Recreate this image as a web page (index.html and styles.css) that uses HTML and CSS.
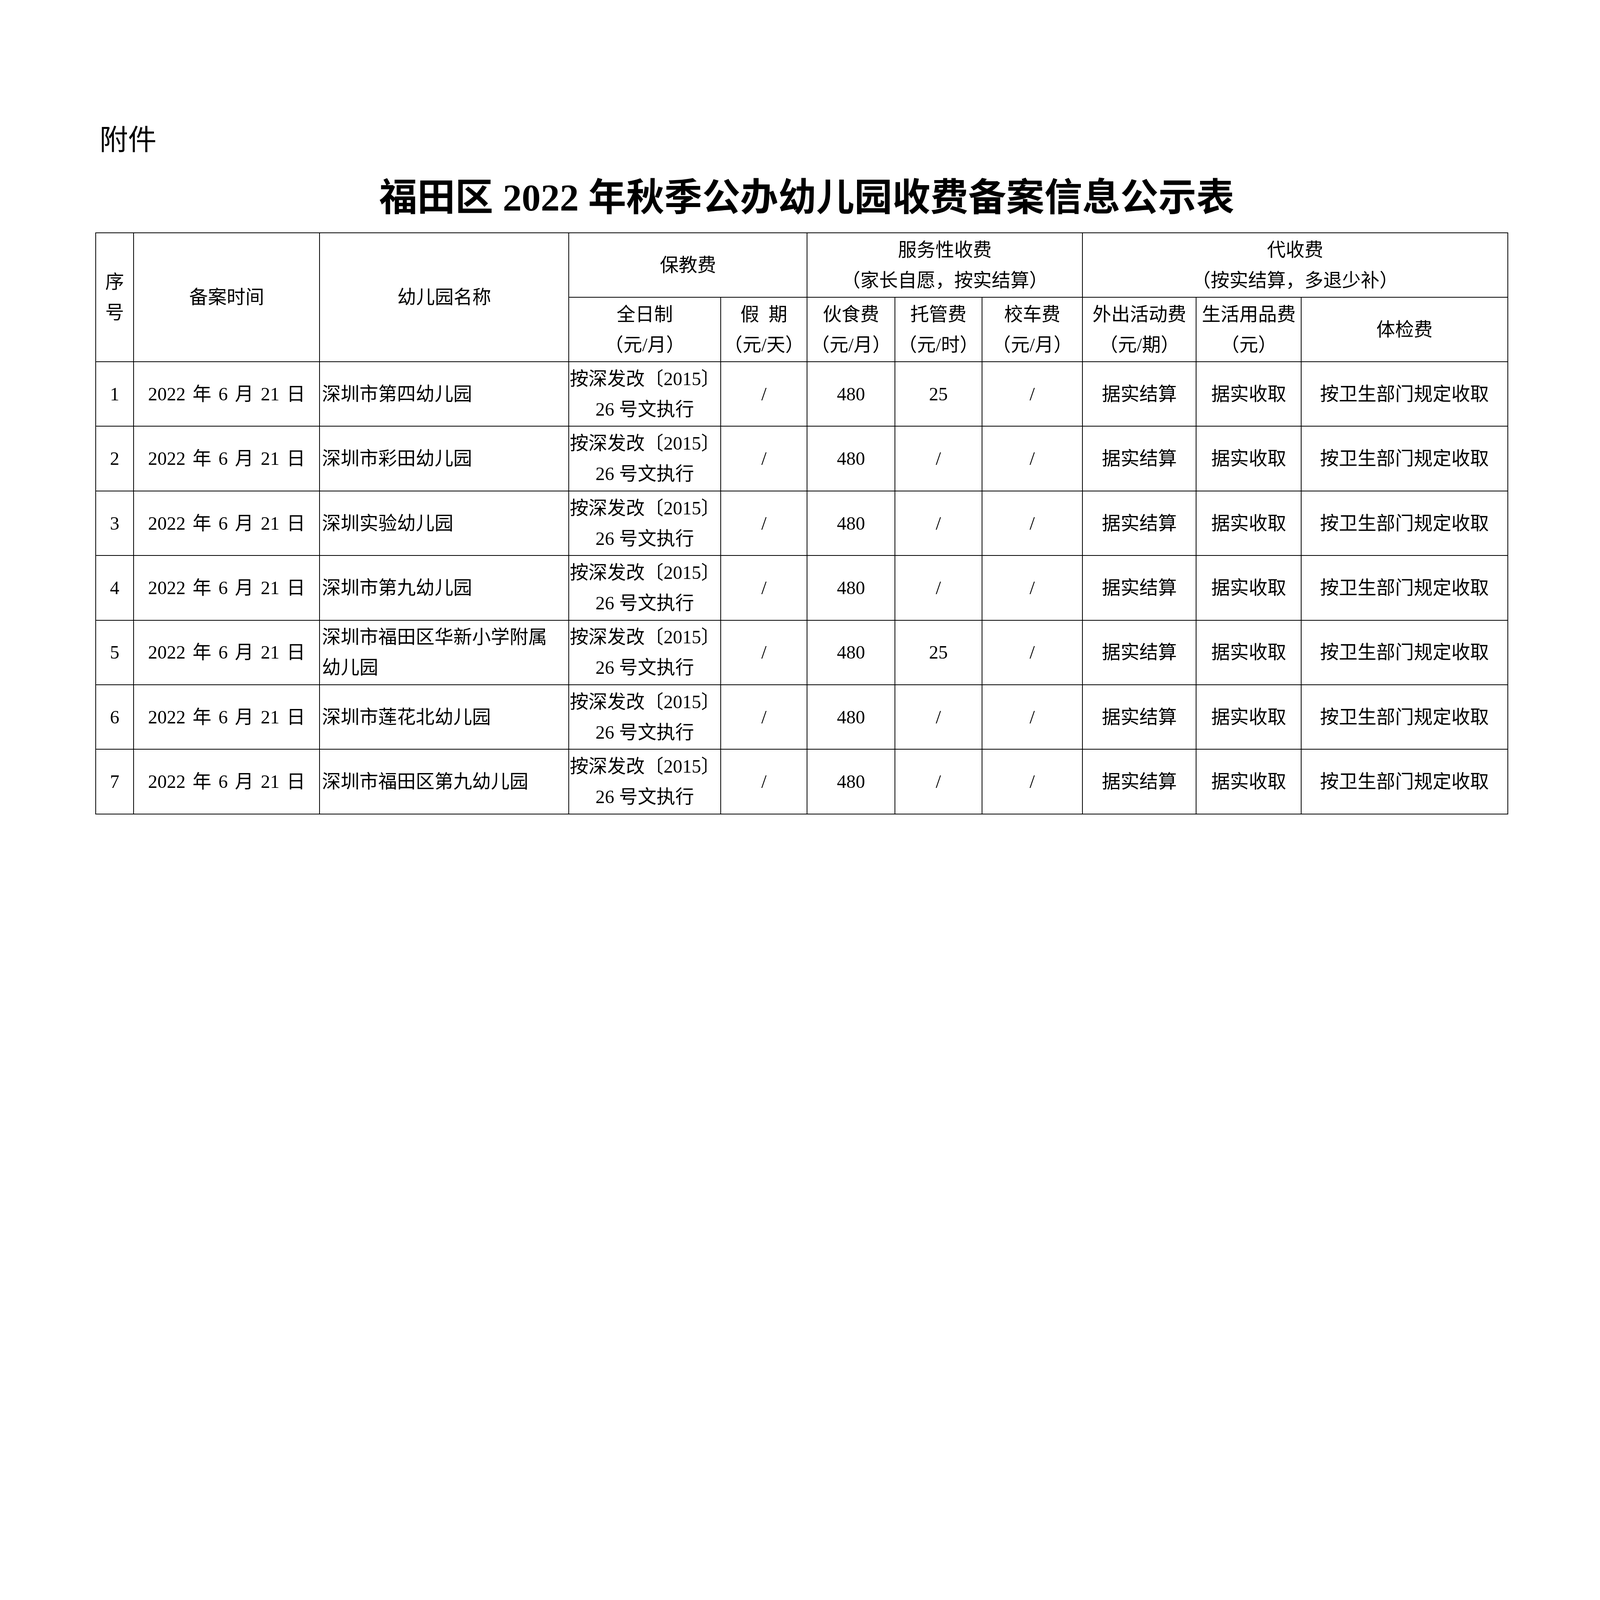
FILE: index.html
```html
<!DOCTYPE html>
<html lang="zh-CN">
<head>
<meta charset="utf-8">
<title>福田区2022年秋季公办幼儿园收费备案信息公示表</title>
<link rel="stylesheet" href="styles.css">
</head>
<body>
<div class="page">
  <div class="attach">附件</div>
  <h1 class="title">福田区 2022 年秋季公办幼儿园收费备案信息公示表</h1>
  <table class="fees">
    <colgroup>
      <col class="c-no"><col class="c-date"><col class="c-name"><col class="c-full"><col class="c-hol">
      <col class="c-food"><col class="c-care"><col class="c-bus"><col class="c-out"><col class="c-life"><col class="c-check">
    </colgroup>
    <tr class="hrow">
      <th rowspan="2">序<br>号</th>
      <th rowspan="2">备案时间</th>
      <th rowspan="2">幼儿园名称</th>
      <th colspan="2">保教费</th>
      <th colspan="3">服务性收费<br>（家长自愿，按实结算）</th>
      <th colspan="3">代收费<br>（按实结算，多退少补）</th>
    </tr>
    <tr class="hrow">
      <th>全日制<br>（元/月）</th>
      <th>假&nbsp;&nbsp;期<br>（元/天）</th>
      <th>伙食费<br>（元/月）</th>
      <th>托管费<br>（元/时）</th>
      <th>校车费<br>（元/月）</th>
      <th>外出活动费<br>（元/期）</th>
      <th>生活用品费<br>（元）</th>
      <th>体检费</th>
    </tr>
    <tr class="drow">
      <td>1</td><td class="date">2022 年 6 月 21 日</td><td class="name">深圳市第四幼儿园</td>
      <td>按深发改〔2015〕<br>26 号文执行</td><td>/</td><td>480</td><td>25</td><td>/</td>
      <td>据实结算</td><td>据实收取</td><td>按卫生部门规定收取</td>
    </tr>
    <tr class="drow">
      <td>2</td><td class="date">2022 年 6 月 21 日</td><td class="name">深圳市彩田幼儿园</td>
      <td>按深发改〔2015〕<br>26 号文执行</td><td>/</td><td>480</td><td>/</td><td>/</td>
      <td>据实结算</td><td>据实收取</td><td>按卫生部门规定收取</td>
    </tr>
    <tr class="drow">
      <td>3</td><td class="date">2022 年 6 月 21 日</td><td class="name">深圳实验幼儿园</td>
      <td>按深发改〔2015〕<br>26 号文执行</td><td>/</td><td>480</td><td>/</td><td>/</td>
      <td>据实结算</td><td>据实收取</td><td>按卫生部门规定收取</td>
    </tr>
    <tr class="drow">
      <td>4</td><td class="date">2022 年 6 月 21 日</td><td class="name">深圳市第九幼儿园</td>
      <td>按深发改〔2015〕<br>26 号文执行</td><td>/</td><td>480</td><td>/</td><td>/</td>
      <td>据实结算</td><td>据实收取</td><td>按卫生部门规定收取</td>
    </tr>
    <tr class="drow">
      <td>5</td><td class="date">2022 年 6 月 21 日</td><td class="name">深圳市福田区华新小学附属<br>幼儿园</td>
      <td>按深发改〔2015〕<br>26 号文执行</td><td>/</td><td>480</td><td>25</td><td>/</td>
      <td>据实结算</td><td>据实收取</td><td>按卫生部门规定收取</td>
    </tr>
    <tr class="drow">
      <td>6</td><td class="date">2022 年 6 月 21 日</td><td class="name">深圳市莲花北幼儿园</td>
      <td>按深发改〔2015〕<br>26 号文执行</td><td>/</td><td>480</td><td>/</td><td>/</td>
      <td>据实结算</td><td>据实收取</td><td>按卫生部门规定收取</td>
    </tr>
    <tr class="drow">
      <td>7</td><td class="date">2022 年 6 月 21 日</td><td class="name">深圳市福田区第九幼儿园</td>
      <td>按深发改〔2015〕<br>26 号文执行</td><td>/</td><td>480</td><td>/</td><td>/</td>
      <td>据实结算</td><td>据实收取</td><td>按卫生部门规定收取</td>
    </tr>
  </table>
</div>
</body>
</html>
```

FILE: styles.css
```css
/* 1rem = 100px when the window is 6735px wide; the layout scales with the window */
html {
  font-size: calc(100vw / 67.35);
}
html, body {
  margin: 0;
  padding: 0;
  background: #fff;
}
body {
  font-family: "Liberation Serif", "Noto Sans CJK SC", serif;
  color: #000;
}
.page {
  width: 67.35rem;
  min-height: 47.62rem;
  box-sizing: border-box;
  padding: 5.07rem 0 0 4.01rem;
  background: #fff;
}
.attach {
  font-family: "Noto Sans CJK SC", sans-serif;
  font-size: 1.2rem;
  line-height: 1.44rem;
  margin-left: 0.18rem;
}
.title {
  width: 59.44rem;
  margin: 0.85rem 0 0.51rem;
  padding-left: 0.46rem;
  box-sizing: border-box;
  text-align: center;
  font-family: "Liberation Serif", "Noto Sans CJK SC", serif;
  font-size: 1.6rem;
  line-height: 1.92rem;
  font-weight: 700;
}
.fees {
  border-collapse: collapse;
  table-layout: fixed;
  width: 59.44rem;
  font-size: 0.79rem;
  line-height: 1.28rem;
}
.fees th,
.fees td {
  border: 0.04rem solid #000;
  padding: 0;
  text-align: center;
  vertical-align: middle;
  white-space: nowrap;
  font-weight: 400;
}
.fees .name {
  text-align: left;
  padding-left: 0.08rem;
}
.fees .date {
  word-spacing: 0.1rem;
}
.hrow { height: 2.71rem; }
.drow { height: 2.72rem; }
.c-no { width: 1.6rem; }
.c-date { width: 7.83rem; }
.c-name { width: 10.49rem; }
.c-full { width: 6.39rem; }
.c-hol { width: 3.64rem; }
.c-food { width: 3.69rem; }
.c-care { width: 3.67rem; }
.c-bus { width: 4.23rem; }
.c-out { width: 4.79rem; }
.c-life { width: 4.42rem; }
.c-check { width: 8.69rem; }
```
